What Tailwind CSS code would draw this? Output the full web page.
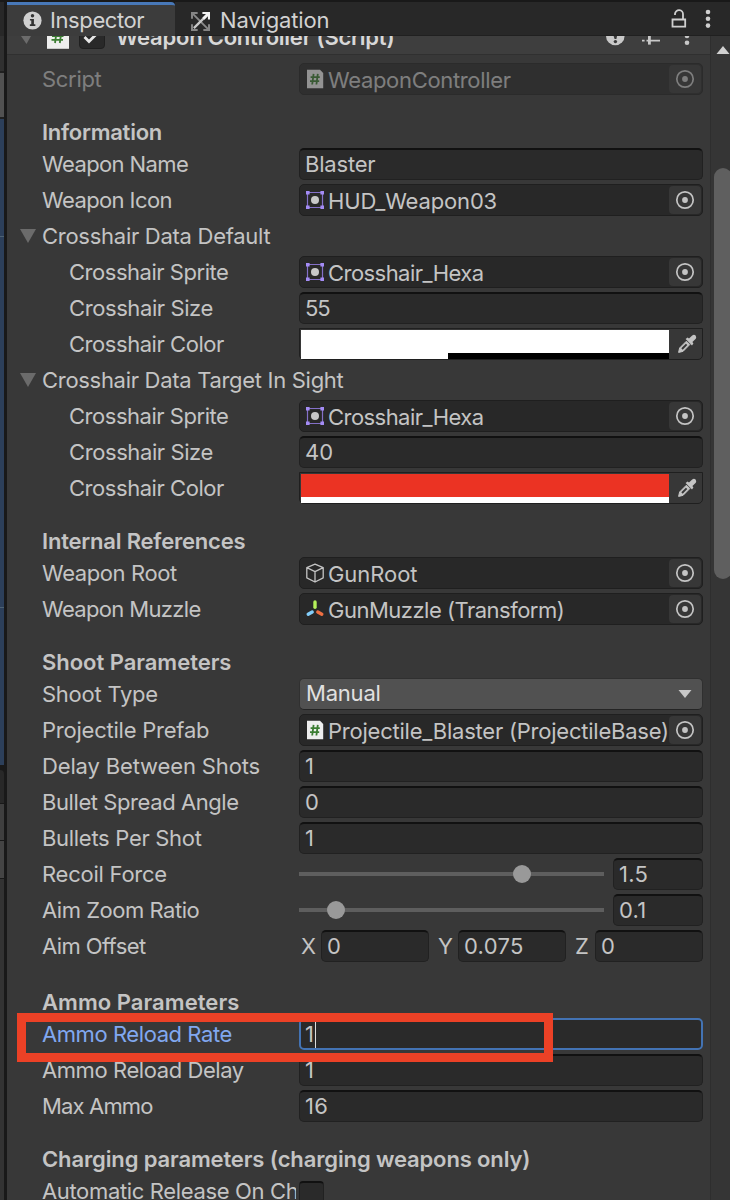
<!DOCTYPE html>
<html lang="en">
<head>
<meta charset="utf-8">
<title>Inspector</title>
<script src="https://cdn.jsdelivr.net/npm/@tailwindcss/browser@4"></script>
</head>
<body class="w-[730px] h-[1200px] overflow-hidden bg-[#191919] font-['Inter',sans-serif] text-[22px] tracking-[0.3px] text-[#c4c4c4] whitespace-nowrap">
<svg class="hidden">
  <symbol id="pick" viewBox="0 0 20 20"><circle cx="10" cy="10" r="8.2" fill="none" stroke="currentColor" stroke-width="1.7"/><circle cx="10" cy="10" r="2.9" fill="currentColor"/></symbol>
  <symbol id="sprite" viewBox="0 0 20 20"><path d="M2.5 2.5H17.5V17.5H2.5Z" fill="none" stroke="#8470c8" stroke-width="1.2"/><path d="M1 1h3.6v3.6H1zM15.4 1H19v3.6h-3.6zM1 15.4h3.6V19H1zM15.4 15.4H19V19h-3.6z" fill="#a48cf5"/><circle cx="10" cy="10" r="4" fill="#c8c8c8"/></symbol>
  <symbol id="script" viewBox="0 0 20 20"><path d="M2 .8H15L18.2 4V19.2H2Z" fill="#eee"/><path d="M8.6 4.8 7.2 15.5M12.8 4.8 11.4 15.5M5.6 8.2H14.8M5 12.2H14.2" fill="none" stroke="#3b7d32" stroke-width="1.8"/></symbol>
  <symbol id="cube" viewBox="0 0 20 20"><path d="M10 1.2 18.2 4.6V14.8L10 19 1.8 14.8V4.6ZM1.8 4.6 10 8.6 18.2 4.6M10 8.6V19" fill="none" stroke="#c4c4c4" stroke-width="1.3" stroke-linejoin="round"/></symbol>
  <symbol id="transform" viewBox="0 0 20 20"><path d="M10 3V8.2" stroke="#b5f05a" stroke-width="3.4" stroke-linecap="round"/><path d="M7.2 13 3.2 15.2" stroke="#82cdfa" stroke-width="3.4" stroke-linecap="round"/><path d="M12.8 13 16.8 15.2" stroke="#ee6f42" stroke-width="3.4" stroke-linecap="round"/></symbol>
  <symbol id="dropper" viewBox="0 0 20 20"><path d="M1.6 18.4 2.6 14 9.4 7.2 12.8 10.6 6 17.4Z" fill="currentColor" stroke="currentColor" stroke-linejoin="round"/><path d="M5 15 9.6 10.4" stroke="#373737" stroke-width="2"/><path d="M8.6 5 10.6 3.6 12 4.6 15.2 1.4Q17 .3 18.6 1.4 19.8 3 18.8 4.8L15.4 8 16.4 9.4 15 11.4Z" fill="currentColor"/></symbol>
</svg>
<div class="flex h-[1200px]">
  <div class="w-1 shrink-0 flex flex-col">
    <div class="h-[2px]"></div><div class="h-[34px] bg-[#282828]"></div>
    <div class="h-[37px] bg-[#303030] border-b-2 border-[#202020]"></div>
    <div class="h-[44px] bg-[#515151]"></div><div class="h-[2px] bg-[#202020]"></div>
    <div class="h-[117px] bg-[#2c3f5a]"></div><div class="h-px bg-[#4d6274]"></div>
    <div class="h-[370px] bg-[#2c3f5a]"></div><div class="h-px bg-[#4d6274]"></div>
    <div class="h-[157px] bg-[#2c3f5a]"></div><div class="h-[5px]"></div>
    <div class="h-[33px] bg-[#282828] rounded-tr"></div><div class="h-px"></div>
    <div class="h-[36px] bg-[#3f3f3f]"></div><div class="h-px"></div>
    <div class="h-[37px] bg-[#444]"></div><div class="h-px"></div>
    <div class="flex-1 bg-[#333]"></div>
  </div>
  <div class="w-[3px] shrink-0 bg-[#191919]"></div>
  <div class="w-[723px] flex flex-col">
    <div class="h-9 pt-[2px] flex shrink-0">
      <div class="w-[168px] h-[34px] bg-[#3c3c3c] border-t-[3px] border-[#4878b8] rounded-tr flex items-center pl-4">
        <svg class="w-[19px] h-[19px]" viewBox="0 0 20 20"><circle cx="10" cy="10" r="9.6" fill="#d0d0d0"/><circle cx="10" cy="5" r="1.8" fill="#333"/><path d="M7.3 8.3H11.5V14H13V15.8H7.2V14H8.7V10H7.3Z" fill="#333"/></svg>
        <span class="ml-[8px] tracking-[-0.4px] text-[#d2d2d2]">Inspector</span>
      </div>
      <div class="flex-1 bg-[#282828] border-b border-[#202020] flex items-center pt-1 text-[#d2d2d2]">
        <svg class="ml-4 mt-[2px] w-[19px] h-[19px]" viewBox="0 0 20 20"><path d="M2 2 18 18" stroke="#8a8a8a" stroke-width="2"/><path d="M3 17 17 3" stroke="#c8c8c8" stroke-width="2.4"/><path d="M1 7V1H7M13 19H19V13M1 13V19H7" fill="none" stroke="#858585" stroke-width="2.2"/><path d="M12 1H19V8" fill="none" stroke="#f4f4f4" stroke-width="2.4"/><path d="M13 7 18 2" stroke="#f4f4f4" stroke-width="3"/></svg>
        <span class="ml-[10px] tracking-[-0.15px]">Navigation</span>
        <svg class="ml-auto w-4 h-5 -mt-[3px]" viewBox="0 0 16 20"><path d="M1.5 10.5H14.2V17.7H1.5ZM12 10V5.5A4 4 0 0 0 4 4.8V6" fill="none" stroke="#cfcfcf" stroke-width="1.8"/></svg>
        <svg class="ml-[18px] mr-[19px] -mt-[3px] w-[6px] h-[20px]" viewBox="0 0 6 20"><g fill="#cfcfcf"><circle cx="3" cy="3" r="2.3"/><circle cx="3" cy="9.8" r="2.3"/><circle cx="3" cy="16.6" r="2.3"/></g></svg>
      </div>
    </div>
    <div class="flex flex-1 min-h-0">
      <div class="w-[703px] bg-[#383838] flex flex-col overflow-hidden">
        <div class="h-[19px] shrink-0 bg-[#3e3e3e] border-b border-[#303030] overflow-hidden flex">
          <svg class="ml-[14px] w-[12px] h-[9px]" viewBox="0 0 12 9"><path d="M0 0H10L5.5 8Z" fill="#6b6b6b"/></svg>
          <svg class="ml-[13px] -mt-[11px] w-[24px] h-[24px] shrink-0" viewBox="0 0 24 24"><path d="M1 0H23V23.8H1Z" fill="#eee"/><path d="M11 4 9 18M15.8 4 13.8 18M6 11H17.5M5.5 14.8H17" fill="none" stroke="#3b7d32" stroke-width="1.8"/></svg>
          <div class="ml-[9px] -mt-[12px] w-[26px] h-[25px] shrink-0 bg-[#292929] border border-[#202020] rounded"><svg class="w-6 h-6" viewBox="0 0 24 24"><path d="M4.5 12 9 16.5 17 8.5" fill="none" stroke="#e6e6e6" stroke-width="2.8"/></svg></div>
          <span class="ml-[11px] -mt-[13px] h-7 leading-7 font-semibold tracking-[-0.23px] text-[#d8d8d8]">Weapon Controller (Script)</span>
          <svg class="ml-auto mr-5 w-[84px] h-[10px] shrink-0" viewBox="0 0 84 10"><path d="M0 0A9.3 9.3 0 0 0 18.6 0Z" fill="#c8c8c8"/><path d="M7.6 0H11L10.4 3H8.6Z" fill="#383838"/><circle cx="9.4" cy="5.6" r="1.7" fill="#383838"/><path d="M36 4.7H38.6M40.5 4.7H54" stroke="#c8c8c8" stroke-width="1.8" fill="none"/><path d="M42 0h2.8v8.6h-2.8z" fill="#c8c8c8"/><circle cx="81" cy="0" r="2.3" fill="#c8c8c8"/><circle cx="81" cy="6.7" r="2.3" fill="#c8c8c8"/></svg>
        </div>
        <div id="rows" class="pt-2 flex flex-col"></div>
      </div>
      <div class="w-5 bg-[#353535] border-l border-[#2e2e2e] flex flex-col pl-[3px]">
        <svg class="mt-[10px] ml-[2px] w-[14px] h-[8px] shrink-0" viewBox="0 0 14 8"><path d="M.5 8 7 0 13.5 8Z" fill="#d0d0d0"/></svg>
        <div class="mt-[114px] h-[411px] shrink-0 w-[18px] rounded-full bg-[#5f5f5f]"></div>
      </div>
    </div>
  </div>
</div>
<div class="absolute left-[17px] top-[1013px] w-[536px] h-[49px] border-[9px] border-[#ec4126]"></div>
<script>
// Text with its own letter spacing in px
const t = (s, sp) => `<span style="letter-spacing:${sp}px">${s}</span>`;
const icon = n => `<svg class="ml-[5px] mr-[3px] w-5 h-5 shrink-0"><use href="#${n}"/></svg>`;
const box = (v, w = 'flex-1') => `<div class="${w} h-8 rounded-[5px] bg-[#2a2a2a] border border-[#212121] border-t-2 border-t-[#111] flex items-center pl-[5px] pb-px">${v}</div>`;
const obj = (n, v) => `<div class="flex-1 min-w-0 h-8 rounded-[5px] bg-[#282828] border border-[#1f1f1f] flex items-center">${icon(n)}<div class="pt-[2px] flex-1 min-w-0">${v}</div><div class="mr-px w-8 h-7 shrink-0 rounded bg-[#373737] flex items-center justify-center"><svg class="w-5 h-5"><use href="#pick"/></svg></div></div>`;
const color = (c, bar) => `<div class="flex-1 h-8 rounded-b-[5px] bg-[#373737] border border-[#1f1f1f] pl-px flex"><div class="w-[368px] h-[29px] mt-px flex flex-col ${c}"><div class="flex-1"></div>${bar}</div><div class="flex-1 flex items-center justify-center pl-[3px]"><svg class="w-5 h-5"><use href="#dropper"/></svg></div></div>`;
const slider = (p, v) => `<div class="relative w-[305px] h-1 bg-[#5e5e5e] mr-[9px]"><div class="absolute -top-[7px] w-[18px] h-[18px] rounded-full bg-[#999]" style="left:${p}px"></div></div>${box(v)}`;
const row = (l, f = '', cls = 'w-[292px] pl-[35px]') => `<div class="h-9 pb-1 pr-[7px] flex items-center shrink-0"><div class="shrink-0 ${cls}">${l}</div>${f}</div>`;
const head = (s, h = 'h-[49px]') => `<div class="${h} pl-[35px] flex items-end pb-px shrink-0 font-semibold"><div class="leading-[30px]">${s}</div></div>`;
const fold = s => row(`<div class="flex items-center"><svg class="w-4 h-[14px] mr-[6px] shrink-0" viewBox="0 0 16 14"><path d="M0 0H16L8 14Z" fill="#6b6b6b"/></svg>${s}</div>`, '', 'pl-[13px]');
const sub = (l, f) => row(l, f, 'w-[292px] pl-[62px]');
document.getElementById('rows').innerHTML =
  `<div class="opacity-50">${row(t('Script', -0.3), obj('script', t('WeaponController', -0.33)))}</div>` +
  head(t('Information', -0.25)) +
  row(t('Weapon Name', -0.6), box(t('Blaster', -0.2))) +
  row(t('Weapon Icon', -0.6), obj('sprite', t('HUD_Weapon03', -0.15))) +
  fold(t('Crosshair Data Default', -0.27)) +
  sub(t('Crosshair Sprite', -0.47), obj('sprite', t('Crosshair_Hexa', -0.55))) +
  sub(t('Crosshair Size', -0.41), box(t('55', -1))) +
  sub(t('Crosshair Color', -0.45), color('bg-white', '<div class="h-[6px] ml-[147px] bg-black"></div>')) +
  fold(t('Crosshair Data Target In Sight', -0.3)) +
  sub(t('Crosshair Sprite', -0.47), obj('sprite', t('Crosshair_Hexa', -0.55))) +
  sub(t('Crosshair Size', -0.41), box(t('40', 0))) +
  sub(t('Crosshair Color', -0.45), color('bg-[#eb3323]', '<div class="h-[6px] bg-white"></div>')) +
  head(t('Internal References', -0.2)) +
  row(t('Weapon Root', -0.4), obj('cube', t('GunRoot', -0.05))) +
  row(t('Weapon Muzzle', -0.66), obj('transform', t('GunMuzzle (Transform)', -0.5))) +
  head(t('Shoot Parameters', -0.03)) +
  row(t('Shoot Type', -0.25), `<div class="flex-1 h-8 rounded-[5px] bg-[#515151] border border-[#303030] border-b-[#242424] flex items-center pl-[6px] pb-[2px] text-[#e0e0e0]">${t('Manual', -0.2)}<svg class="ml-auto mr-[10px] mt-[2px] w-[14px] h-2" viewBox="0 0 14 8"><path d="M.5 0H13.5L7 8Z" fill="#c8c8c8"/></svg></div>`) +
  row(t('Projectile Prefab', -0.23), obj('script', t('Projectile_Blaster (ProjectileBase)', -0.23))) +
  row(t('Delay Between Shots', -0.14), box('1')) +
  row(t('Bullet Spread Angle', -0.42), box('0')) +
  row(t('Bullets Per Shot', -0.3), box('1')) +
  row(t('Recoil Force', -0.25), slider(214, '1.5')) +
  row(t('Aim Zoom Ratio', -0.47), slider(28, '0.1')) +
  row(t('Aim Offset', -0.6), `<span class="w-[22px] pl-[2px]">X</span>${box('0', 'w-[108px]')}<span class="w-[29px] pl-[9px]">Y</span>${box('0.075', 'w-[108px]')}<span class="w-[29px] pl-[9px]">Z</span>${box('0')}`) +
  head(t('Ammo Parameters', 0.05), 'h-[52px] pb-[4px]') +
  row(`<div class="text-[#81a8f0]">${t('Ammo Reload Rate', -0.43)}</div>`, `<div class="flex-1 h-8 rounded-[5px] bg-[#2a2a2a] border-2 border-[#4373b4] flex items-center pl-1">1<div class="ml-px w-px h-[27px] bg-[#ddd]"></div></div>`) +
  row(t('Ammo Reload Delay', -0.42), box('1')) +
  row(t('Max Ammo', -0.84), box('16')) +
  head(t('Charging parameters (charging weapons only)', -0.13)) +
  row(`<div class="w-[254px] overflow-hidden">${t('Automatic Release On Charged', -0.35)}</div>`, '<div class="mt-[5px] w-[25px] h-[26px] rounded bg-[#2a2a2a] border border-[#212121] border-t-2 border-t-[#111]"></div>');
</script>
</body>
</html>
